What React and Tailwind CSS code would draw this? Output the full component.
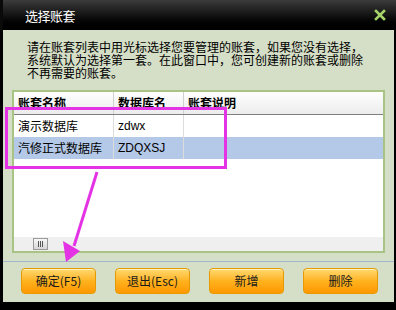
import React from "react";

const font = { fontFamily: '"Noto Sans CJK SC", "Liberation Sans", sans-serif' };

const rows = [
  { name: "演示数据库", db: "zdwx", note: "", selected: false },
  { name: "汽修正式数据库", db: "ZDQXSJ", note: "", selected: true },
];

const buttons = ["确定(F5)", "退出(Esc)", "新增", "删除"];

export default function App() {
  return (
    <div className="relative w-[396px] h-[310px] bg-black overflow-hidden text-[12px] text-black" style={font}>
      {/* title bar */}
      <div className="h-[30px] flex items-center justify-between pl-[22px] pr-[8px] bg-gradient-to-b from-[#3c3c3c] via-[#141414] to-black border-l-[3px] border-[#0a0a0a]">
        <span className="text-white text-[13px] leading-none tracking-[-0.5px]">选择账套</span>
        <svg width="12" height="12" viewBox="0 0 12 12" className="mr-[2px]">
          <path d="M2 2 L10 10 M10 2 L2 10" stroke="#a6d46a" strokeWidth="2.6" strokeLinecap="square" />
        </svg>
      </div>

      {/* body */}
      <div className="ml-[3px] mr-[2px] h-[272px] bg-[#d5dec6] flex flex-col">
        <div className="pl-[24px] pt-[10px] h-[60px] leading-[13px] text-[12px]">
          <div>请在账套列表中用光标选择您要管理的账套，如果您没有选择，</div>
          <div>系统默认为选择第一套。在此窗口中，您可创建新的账套或删除</div>
          <div>不再需要的账套。</div>
        </div>

        {/* table */}
        <div className="ml-[9px] w-[373px] h-[163px] border-2 border-[#a9c385] bg-white flex flex-col">
          <div className="h-[23px] flex border-b border-[#7f7f7f] bg-gradient-to-b from-white to-[#ececec] font-bold">
            <div className="w-[100px] pl-[4px] flex items-center border-r border-[#d0d0d0]">账套名称</div>
            <div className="w-[70px] pl-[4px] flex items-center border-r border-[#d0d0d0]">数据库名</div>
            <div className="flex-1 pl-[4px] flex items-center">账套说明</div>
          </div>
          {rows.map((r) => (
            <div key={r.name} className={`h-[22px] flex ${r.selected ? "bg-[#b4c8e8]" : "bg-white"}`}>
              <div className="w-[100px] pl-[4px] flex items-center border-r border-[#dcdcdc]">{r.name}</div>
              <div className="w-[70px] pl-[4px] flex items-center border-r border-[#dcdcdc]" style={{ fontFamily: '"Liberation Sans", sans-serif' }}>{r.db}</div>
              <div className="flex-1 pl-[4px] flex items-center">{r.note}</div>
            </div>
          ))}
          <div className="flex-1" />
          <div className="h-[14px] bg-[#efefef] flex items-center pl-[19px]">
            <div className="w-[15px] h-[12px] border border-[#9a9a9a] bg-gradient-to-b from-[#f8f8f8] to-[#d6d6d6] flex items-center justify-center gap-[1px]">
              <span className="w-px h-[6px] bg-[#555]" />
              <span className="w-px h-[6px] bg-[#555]" />
              <span className="w-px h-[6px] bg-[#555]" />
            </div>
          </div>
        </div>

        <div className="mt-[8px] h-px bg-[#9fb6cc]" />

        {/* buttons */}
        <div className="mt-[6px] pl-[18px] flex gap-[19px]">
          {buttons.map((b) => (
            <div
              key={b}
              className="w-[75px] h-[26px] rounded-[4px] border border-[#e79a00] bg-gradient-to-b from-[#ffd96a] via-[#ffb21c] to-[#ff9800] flex items-center justify-center text-[12px] text-[#1a1a1a] shadow-[inset_0_1px_0_#fff3c0]"
            >
              {b}
            </div>
          ))}
        </div>
      </div>

      {/* magenta highlight overlay */}
      <div className="absolute left-[5px] top-[107px] w-[222px] h-[62px] border-[3px] border-[#e433e4]" />
      <svg className="absolute left-0 top-0" width="396" height="310" viewBox="0 0 396 310">
        <line x1="97" y1="172" x2="74" y2="246" stroke="#e433e4" strokeWidth="3" />
        <polygon points="63,241 80,251 66,262" fill="#e433e4" />
      </svg>
    </div>
  );
}
